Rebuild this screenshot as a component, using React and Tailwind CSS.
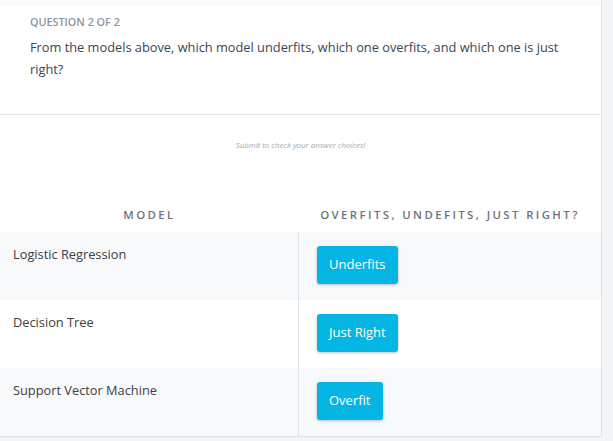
export default function App() {
  const rows = [
    { model: "Logistic Regression", answer: "Underfits", bg: "bg-[#f8f9fb]" },
    { model: "Decision Tree", answer: "Just Right", bg: "bg-white" },
    { model: "Support Vector Machine", answer: "Overfit", bg: "bg-[#f8f9fb]" },
  ];
  return (
    <div className="w-[613px] h-[441px] bg-[#f4f5f7] overflow-hidden" style={{ fontFamily: '"Open Sans", "Liberation Sans", sans-serif' }}>
      <div className="w-[602px] h-[6px] bg-[#fafbfc] border-r border-[#dde3ea]" />
      <div className="w-[602px] bg-white border-r border-b border-[#dde3ea]">
        <div className="pl-[30px] pr-[20px] pt-[9px] pb-[34px] border-b border-[#dde3ea]">
          <div className="text-[10.8px] font-semibold text-[#8b96a3] leading-[14px]">QUESTION 2 OF 2</div>
          <div className="mt-[7px] text-[12.8px] leading-[22px] text-[#3d4550]">
            From the models above, which model underfits, which one overfits, and which one is just right?
          </div>
        </div>
        <div className="h-[60px] flex items-center justify-center pt-[2px]">
          <span className="text-[7.9px] italic text-[#a9a9a9]">Submit to check your answer choices!</span>
        </div>
        <div className="flex h-[57px] items-center pt-[22px]">
          <div className="w-[299px] text-center text-[11.4px] font-semibold tracking-[2.4px] text-[#6c747c]">MODEL</div>
          <div className="flex-1 text-center text-[11.4px] font-semibold tracking-[2.4px] text-[#6c747c]">OVERFITS, UNDEFITS, JUST RIGHT?</div>
        </div>
        {rows.map((r) => (
          <div key={r.model} className={`flex h-[68px] ${r.bg}`}>
            <div className="w-[299px] border-r border-[#dde3ea] pl-[13px] pt-[13px] text-[12.8px] leading-[18px] text-[#3d4044]">
              {r.model}
            </div>
            <div className="flex-1 pl-[18px] pt-[14px]">
              <button className="h-[38px] px-[12px] rounded-[3px] bg-[#05b6e4] text-white text-[13px] shadow-[0_1px_3px_rgba(0,0,0,0.25)]">
                {r.answer}
              </button>
            </div>
          </div>
        ))}
      </div>
    </div>
  );
}
